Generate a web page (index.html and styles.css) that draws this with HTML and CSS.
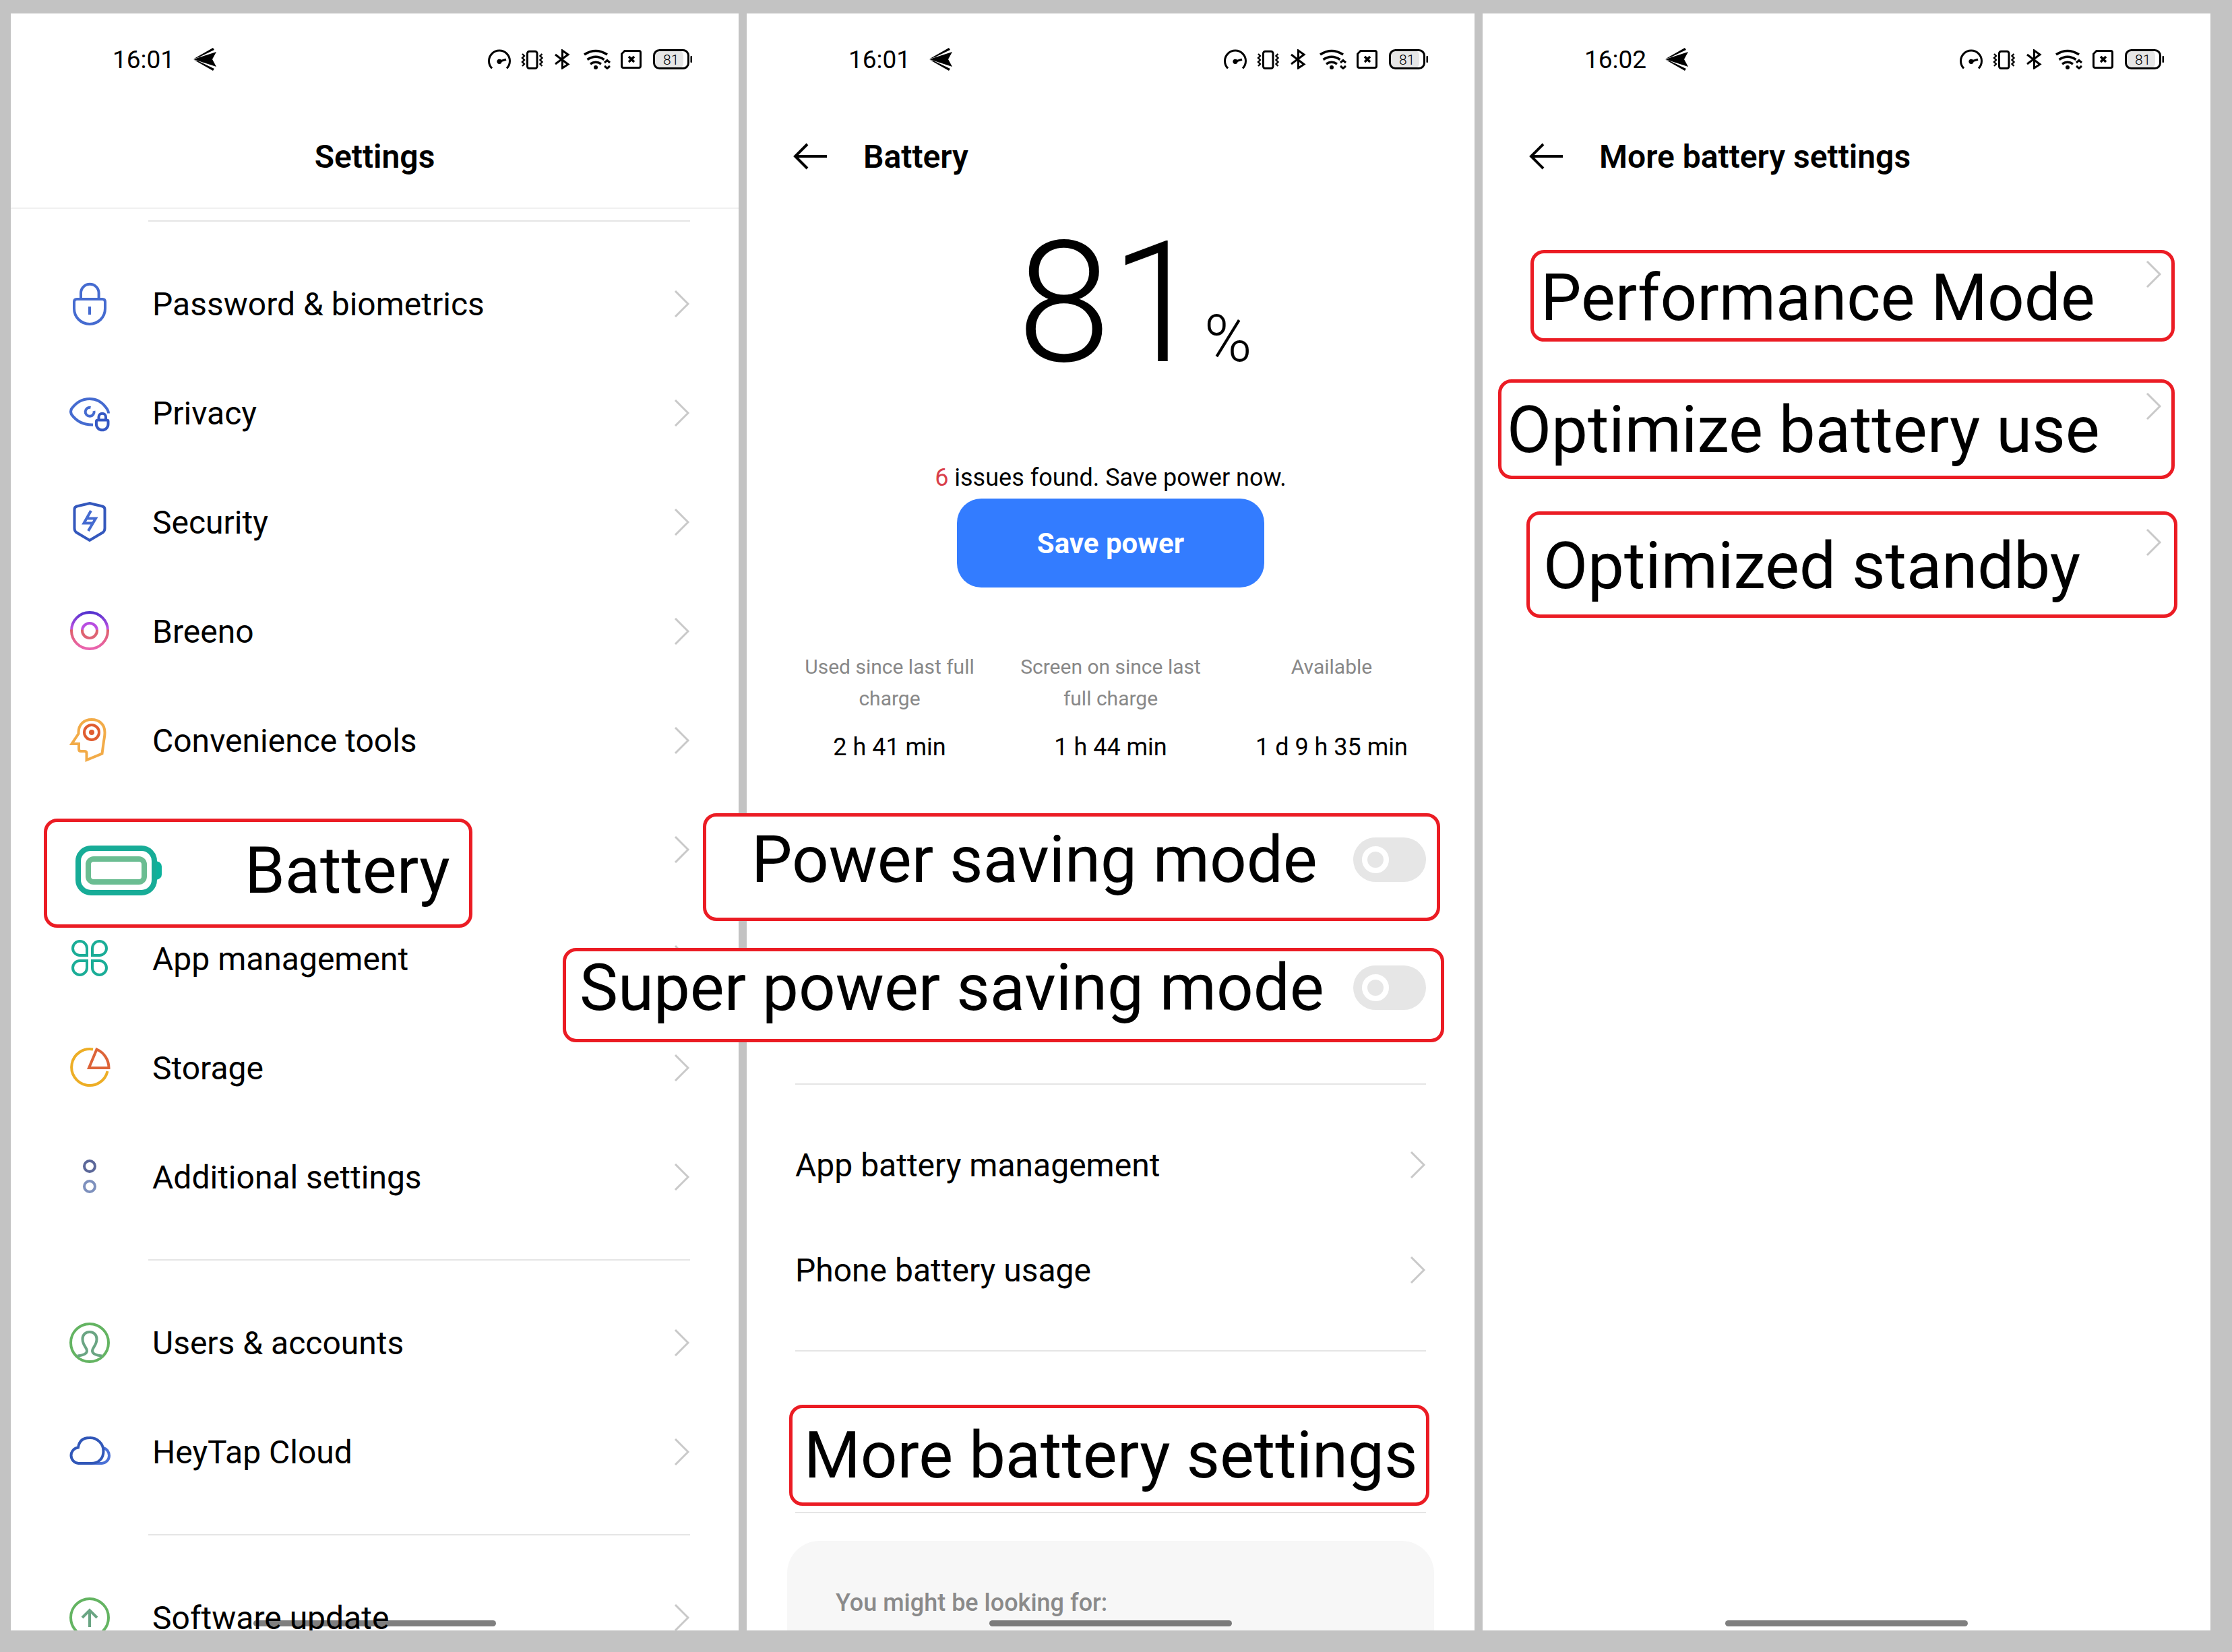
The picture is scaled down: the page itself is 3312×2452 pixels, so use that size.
FILE: index.html
```html
<!DOCTYPE html>
<html lang="en">
  <head>
    <meta charset="UTF-8" />
    <meta name="viewport" content="width=device-width, initial-scale=1.0" />
    <title>Battery settings</title>
    <link rel="stylesheet" href="styles.css">
  </head>
  <body>
    <!-- shared icons -->
    <svg class="sprite" aria-hidden="true">
      <symbol id="plane" viewBox="0 0 36 34">
        <path d="M0 17L34 6L28 17L34 28Z" />
        <path d="M1 16L29 0L31 3L8 14ZM1 18L29 34L31 31L8 20Z" />
      </symbol>
      <symbol id="status-icons" viewBox="0 0 304 30">
        <g fill="none" stroke="#000" stroke-width="3">
          <path d="M7 28.5A15.5 15.5 0 1 1 29 28.5M18 18.3L28 15.3" />
          <rect x="59.5" y="3.3" width="14.5" height="25.2" rx="3" />
          <path stroke-width="2.4" d="M52 7l3 3-3 3 3 3-3 3 3 3-3 3M81.500 7l-3 3 3 3-3 3 3 3-3 3 3 3" />
          <path d="M101 8L120 22.500L111.500 28V2L120 8L101 22" />
          <path stroke-width="3.6" d="M144 8Q161 -3 178 8M148.500 15.500Q161 7 173.500 15.500M153 22Q161 16.500 169 22" />
          <path stroke-width="3" d="M174 20l4-3.500 4 3.500M174 25l4 3.500 4-3.500" />
          <path d="M204 2.500H225Q227.500 2.500 227.500 5V25Q227.500 27.500 225 27.500H202Q199.500 27.500 199.500 25V7Z" />
          <path stroke-width="3.5" d="M210 11l8 8M218 11l-8 8" />
        </g>
        <circle cx="18" cy="18.3" r="3.600" />
        <circle cx="161" cy="27" r="3" />
        <rect x="249" y="2" width="42" height="26" rx="7" fill="#e6e6e6" />
        <rect x="247.500" y="1.500" width="51" height="27" rx="8" fill="none" stroke="#000" stroke-width="3" />
        <rect x="301.500" y="10" width="2.500" height="10" rx="1" />
        <text x="261" y="22.500" font-size="21" font-weight="300">81</text>
      </symbol>
      <symbol id="chevron" viewBox="0 0 24 40">
        <path d="M2 1L21 20L2 39" fill="none" stroke="#c9c9c9" stroke-width="3" />
      </symbol>
      <symbol id="back" viewBox="0 0 50 42">
        <path d="M50 21H4M21 3L3 21L21 39" fill="none" stroke="#000" stroke-width="4" />
      </symbol>
    </svg>

    <main class="screens">
      <section class="phone">
        <div class="status-bar">
          <span>16:01</span>
          <svg class="plane"><use href="#plane" /></svg>
          <svg class="status-icons"><use href="#status-icons" /></svg>
        </div>
        <header class="header header-center">
          <h1>Settings</h1>
        </header>
        <div class="settings-scroll">
          <hr class="inset">
          <ul class="settings-list">
            <li>
              <a class="row" href="#password">
                <svg class="icon" viewBox="0 0 90 90" stroke="#456bd0">
                  <path d="M32 38V29a13.300 13.300 0 0 1 26.600 0v9" />
                  <path d="M26 38H64Q68 38 68 42V52a23 23 0 0 1-46 0V42Q22 38 26 38ZM45 49V61" />
                </svg>
                <span>Password &amp; biometrics</span>
                <svg class="chevron"><use href="#chevron" /></svg>
              </a>
            </li>
            <li>
              <a class="row" href="#privacy">
                <svg class="icon" viewBox="0 0 90 90" stroke="#456bd0">
                  <path d="M73 45.500C73 42 71 39 69 36.500C63 28.500 54 24 45 24C32 24 23 32 18 39Q16 43 18 47C23 54 32 63 50 62.500" />
                  <path d="M46.500 37A6.500 6.500 0 1 0 51.500 42" />
                  <path stroke="#3558c4" d="M58.500 55.500V51a5 5 0 0 1 10.500 0v4.500M57 55.500H70.500Q72.500 55.500 72.500 57.500V61.500a8.800 8.800 0 0 1-17.600 0V57.500Q55 55.500 57 55.500Z" />
                </svg>
                <span>Privacy</span>
                <svg class="chevron"><use href="#chevron" /></svg>
              </a>
            </li>
            <li>
              <a class="row" href="#security">
                <svg class="icon" viewBox="0 0 90 90" stroke="#3458bd">
                  <path d="M45 17L64 21.500Q67.500 22.500 67.500 26V54Q67.500 58 65 60L45 72L25 60Q22.500 58 22.500 54V26Q22.500 22.500 26 21.500Z" />
                  <path stroke="#456bd0" d="M47 28L36.500 46.500H49M43 58L54 39.500H41" />
                </svg>
                <span>Security</span>
                <svg class="chevron"><use href="#chevron" /></svg>
              </a>
            </li>
            <li>
              <a class="row" href="#breeno">
                <svg class="icon" viewBox="0 0 90 90">
                  <defs>
                    <linearGradient id="breeno-outer" x1="0" y1="0" x2="0" y2="1">
                      <stop offset="0" stop-color="#5432cf" />
                      <stop offset="0.460" stop-color="#c252e2" />
                      <stop offset="0.480" stop-color="#de6068" />
                      <stop offset="1" stop-color="#ea63b0" />
                    </linearGradient>
                    <linearGradient id="breeno-inner" x1="0" y1="0" x2="0" y2="1">
                      <stop offset="0" stop-color="#b44be0" />
                      <stop offset="0.420" stop-color="#c252e2" />
                      <stop offset="0.460" stop-color="#de6068" />
                      <stop offset="1" stop-color="#de6478" />
                    </linearGradient>
                  </defs>
                  <circle cx="45" cy="44" r="27" stroke="url(#breeno-outer)" />
                  <circle cx="45" cy="44" r="11" stroke="url(#breeno-inner)" />
                </svg>
                <span>Breeno</span>
                <svg class="chevron"><use href="#chevron" /></svg>
              </a>
            </li>
            <li>
              <a class="row" href="#tools">
                <svg class="icon" viewBox="0 0 90 90" stroke="#f2ab48">
                  <path d="M48 14C36 14 28.500 22 28.500 33V35L18.500 50H29V58Q29 61 32 61H37Q40.500 61 40.500 64V74L63.500 64.500L66 46Q67.500 38 67.500 33C67.500 21 59 14 48 14Z" />
                  <circle cx="48" cy="33" r="11" stroke="#e05c30" />
                  <circle cx="48" cy="33" r="4" fill="#e05c30" stroke="none" />
                </svg>
                <span>Convenience tools</span>
                <svg class="chevron"><use href="#chevron" /></svg>
              </a>
            </li>
            <li class="row row-battery">
              <svg class="chevron"><use href="#chevron" /></svg>
              <a class="callout callout-battery" href="#battery">
                <svg class="battery-icon" viewBox="0 0 128 74" fill="none">
                  <rect x="4" y="4" width="113" height="66" rx="19" stroke="#17ac97" stroke-width="8" />
                  <rect x="19" y="20" width="83" height="34" rx="8" stroke="#6bbd92" stroke-width="8" />
                  <path d="M120 23Q128 25 128 31V43Q128 49 120 51Z" fill="#0cb29c" />
                </svg>
                <span>Battery</span>
              </a>
            </li>
            <li>
              <a class="row" href="#apps">
                <svg class="icon" viewBox="0 0 90 90" stroke="#1aad97">
                  <path d="M41 40H30.500A10.500 10.500 0 1 1 41 29.500Z" />
                  <path d="M49 40H59.500A10.500 10.500 0 1 0 49 29.500Z" />
                  <path d="M41 48H30.500A10.500 10.500 0 1 0 41 58.500Z" />
                  <path d="M49 48H59.500A10.500 10.500 0 1 1 49 58.500Z" />
                </svg>
                <span>App management</span>
                <svg class="chevron"><use href="#chevron" /></svg>
              </a>
            </li>
            <li>
              <a class="row" href="#storage">
                <svg class="icon" viewBox="0 0 90 90" stroke="#edae26">
                  <path d="M50 17.500A27 27 0 1 0 71.500 50" />
                  <path stroke="#dd6438" d="M55.500 17.500L44 45H73.500A30 30 0 0 0 55.500 17.500Z" />
                </svg>
                <span>Storage</span>
                <svg class="chevron"><use href="#chevron" /></svg>
              </a>
            </li>
            <li>
              <a class="row" href="#additional">
                <svg class="icon" viewBox="0 0 90 90">
                  <circle cx="45" cy="29" r="8" stroke="#5b6799" />
                  <circle cx="45" cy="59" r="8" stroke="#7d90bd" />
                </svg>
                <span>Additional settings</span>
                <svg class="chevron"><use href="#chevron" /></svg>
              </a>
            </li>
          </ul>
          <hr class="inset">
          <ul class="settings-list">
            <li>
              <a class="row" href="#users">
                <svg class="icon" viewBox="0 0 90 90" stroke="#64b462">
                  <circle cx="45" cy="45" r="28" />
                  <path stroke="#6aa583" d="M27 64.500C36 63.500 41 61 41 57C41 52 34.500 49 34.500 39.500C34.500 33 39 29 45 29S55.500 33 55.500 39.500C55.500 49 49 52 49 57C49 61 54 63.500 63 64.500" />
                </svg>
                <span>Users &amp; accounts</span>
                <svg class="chevron"><use href="#chevron" /></svg>
              </a>
            </li>
            <li>
              <a class="row" href="#cloud">
                <svg class="icon" viewBox="0 0 90 90" stroke="#4a70d6">
                  <path d="M65.500 39C70 40 74 45 74 50.500A11.500 11.500 0 0 1 63 62H45" />
                  <path stroke="#3157b8" d="M28 38.500Q30 24 45 24A20 20 0 0 1 65.500 44C65.500 55 58 62 47 62H28.500A11.800 11.800 0 0 1 28 38.500Z" />
                </svg>
                <span>HeyTap Cloud</span>
                <svg class="chevron"><use href="#chevron" /></svg>
              </a>
            </li>
          </ul>
          <hr class="inset">
          <ul class="settings-list">
            <li>
              <a class="row" href="#update">
                <svg class="icon" viewBox="0 0 90 90" stroke="#64b462">
                  <circle cx="45" cy="45" r="28" />
                  <path stroke="#6aa583" d="M45 59V34M34 45L45 34L56 45" />
                </svg>
                <span>Software update</span>
                <svg class="chevron"><use href="#chevron" /></svg>
              </a>
            </li>
          </ul>
        </div>
        <div class="home-bar"></div>
      </section>

      <section class="phone">
        <div class="status-bar">
          <span>16:01</span>
          <svg class="plane"><use href="#plane" /></svg>
          <svg class="status-icons"><use href="#status-icons" /></svg>
        </div>
        <header class="header">
          <a href="#settings" aria-label="Back"><svg class="back"><use href="#back" /></svg></a>
          <h1>Battery</h1>
        </header>
        <div class="battery-page">
          <div class="level">
            <span class="level-value">81</span>
            <span class="level-unit">%</span>
          </div>
          <p class="issues"><span class="count">6</span> issues found. Save power now.</p>
          <button class="save-button" type="button">Save power</button>
          <dl class="stats">
            <div>
              <dt>Used since last full charge</dt>
              <dd>2 h 41 min</dd>
            </div>
            <div>
              <dt>Screen on since last full charge</dt>
              <dd>1 h 44 min</dd>
            </div>
            <div>
              <dt>Available</dt>
              <dd>1 d 9 h 35 min</dd>
            </div>
          </dl>
          <label class="callout callout-power">
            <span>Power saving mode</span>
            <input class="toggle" type="checkbox">
          </label>
          <label class="callout callout-super">
            <span>Super power saving mode</span>
            <input class="toggle" type="checkbox">
          </label>
          <hr>
          <a class="row row-small" href="#app-battery">
            <span>App battery management</span>
            <svg class="chevron"><use href="#chevron" /></svg>
          </a>
          <a class="row row-small" href="#usage">
            <span>Phone battery usage</span>
            <svg class="chevron"><use href="#chevron" /></svg>
          </a>
          <hr>
          <a class="callout callout-more" href="#more"><span>More battery settings</span></a>
          <hr class="hr-tight">
          <div class="suggestions">You might be looking for:</div>
        </div>
        <div class="home-bar"></div>
      </section>

      <section class="phone">
        <div class="status-bar">
          <span>16:02</span>
          <svg class="plane"><use href="#plane" /></svg>
          <svg class="status-icons"><use href="#status-icons" /></svg>
        </div>
        <header class="header">
          <a href="#battery" aria-label="Back"><svg class="back"><use href="#back" /></svg></a>
          <h1>More battery settings</h1>
        </header>
        <nav class="more-page">
          <a class="callout callout-performance" href="#performance">
            <span>Performance Mode</span>
            <svg class="chevron"><use href="#chevron" /></svg>
          </a>
          <a class="callout callout-optimize" href="#optimize">
            <span>Optimize battery use</span>
            <svg class="chevron"><use href="#chevron" /></svg>
          </a>
          <a class="callout callout-standby" href="#standby">
            <span>Optimized standby</span>
            <svg class="chevron"><use href="#chevron" /></svg>
          </a>
        </nav>
        <div class="home-bar"></div>
      </section>
    </main>
  </body>
</html>
```
FILE: styles.css
```css
* {
  box-sizing: border-box;
}

body {
  margin: 0;
  background-color: #c3c3c3;
  color: #000;
  font-family: Roboto, "Liberation Sans", sans-serif;
  font-size: 48px;
}

a {
  color: inherit;
  text-decoration: none;
}

svg {
  display: block;
  flex-shrink: 0;
}

.sprite {
  display: none;
}

/* three phone screens side by side */
.screens {
  display: grid;
  grid-template-columns: repeat(3, 1fr);
  gap: 12px;
  height: 100vh;
  padding: 20px 32px 32px 16px;
}

.phone {
  position: relative;
  display: flex;
  flex-direction: column;
  min-width: 0;
  min-height: 0;
  background-color: #fff;
}

.status-bar {
  display: flex;
  flex-shrink: 0;
  align-items: center;
  height: 136px;
  padding: 0 69px 0 151px;
  font-size: 37px;
}

.plane {
  width: 36px;
  height: 34px;
  margin-left: 28px;
}

.status-icons {
  width: 304px;
  height: 30px;
  margin-left: auto;
}

.header {
  display: flex;
  flex-shrink: 0;
  align-items: center;
  gap: 54px;
  height: 152px;
  padding: 0 69px;
}

.header-center {
  justify-content: center;
}

.header h1 {
  margin: 0;
  font-size: 48px;
  font-weight: 600;
}

.back {
  width: 50px;
  height: 42px;
}

hr {
  width: 100%;
  height: 2px;
  margin: 41px 0;
  border: none;
  background-color: #e5e5e5;
}

/* settings list */
.settings-scroll {
  flex: 1;
  min-height: 0;
  overflow: hidden;
  padding: 17px 72px 0;
  border-top: 2px solid #f0f0f0;
}

.settings-list {
  margin: 0;
  padding: 0;
  list-style: none;
}

hr.inset {
  width: auto;
  margin-left: 132px;
}

.inset:first-child {
  margin-top: 0;
}

.row {
  display: flex;
  align-items: center;
  height: 162px;
}

.row-small {
  height: 156px;
}

.icon {
  width: 90px;
  height: 90px;
  margin-right: 48px;
  fill: none;
  stroke-width: 4px;
}

.chevron {
  width: 24px;
  height: 40px;
  margin-left: auto;
}

.row-battery {
  position: relative;
}

/* highlighted entries */
.callout {
  display: flex;
  align-items: center;
  flex-shrink: 0;
  z-index: 1;
  border: 5px solid #eb1c24;
  border-radius: 20px;
  background-color: #fff;
  font-size: 96px;
  line-height: 100px;
  white-space: nowrap;
}

.callout .chevron {
  align-self: flex-start;
  margin-top: -5px;
}

.callout-battery {
  position: absolute;
  top: 35px;
  left: -23px;
  gap: 123px;
  padding: 22px 28px 30px 42px;
}

.battery-icon {
  width: 128px;
  height: 74px;
}

/* battery page */
.battery-page {
  display: flex;
  flex: 1;
  flex-direction: column;
  min-height: 0;
  padding: 18px 72px 0;
}

.battery-page hr {
  flex-shrink: 0;
}

.level {
  display: grid;
  grid-template-columns: 1fr auto 1fr;
  align-items: baseline;
  flex-shrink: 0;
  height: 250px;
  font-weight: 300;
}

.level-value {
  grid-column: 2;
  font-size: 250px;
  line-height: 250px;
}

.level-unit {
  font-size: 96px;
  line-height: 100px;
}

.issues {
  margin: 111px 0 9px;
  font-size: 36px;
  line-height: 44px;
  text-align: center;
}

.count {
  color: #d93f4c;
}

.save-button {
  flex-shrink: 0;
  align-self: center;
  width: 456px;
  height: 132px;
  border: none;
  border-radius: 36px;
  background-color: #337cff;
  color: #fff;
  font-family: inherit;
  font-size: 42px;
  font-weight: 700;
}

.stats {
  display: grid;
  grid-template-columns: repeat(3, 1fr);
  margin: 94px -24px 76px;
  font-size: 36px;
  line-height: 44px;
  text-align: center;
}

.stats div {
  display: flex;
  flex-direction: column;
  justify-content: space-between;
  gap: 27px;
  padding: 0 20px;
}

.stats dt {
  color: #888;
  font-size: 30px;
  line-height: 47px;
}

.stats dd {
  margin: 0;
}

.toggle {
  flex-shrink: 0;
  display: flex;
  align-items: center;
  width: 108px;
  height: 66px;
  margin: 0 0 0 auto;
  padding: 0 13px;
  border-radius: 33px;
  background-color: #e6e6e6;
  appearance: none;
}

.toggle::before {
  content: "";
  box-sizing: border-box;
  width: 40px;
  height: 40px;
  border: 8px solid #fff;
  border-radius: 50%;
}

.toggle:checked {
  justify-content: flex-end;
  background-color: #337cff;
}

.callout-power {
  margin: 0 -21px 40px -137px;
  padding: 14px 16px 36px 67px;
}

.callout-super {
  margin: 0 -27px 20px -345px;
  padding: 4px 22px 26px 20px;
}

.callout-more {
  margin: 38px -5px 9px -9px;
  padding: 20px 13px 20px 17px;
}

.battery-page .hr-tight {
  margin-top: 0;
}

.suggestions {
  flex: 1;
  min-height: 0;
  margin: 0 -12px;
  padding: 70px 72px 0;
  overflow: hidden;
  border-radius: 48px 48px 0 0;
  background-color: #f7f7f7;
  color: #8a8a8a;
  font-size: 36px;
  font-weight: 500;
  line-height: 44px;
}

/* more battery settings page */
.more-page {
  padding-top: 63px;
}

.callout-performance {
  margin: 0 53px 56px 71px;
  padding: 16px 14px 10px 10px;
}

.callout-optimize {
  margin: 0 53px 48px 23px;
  padding: 20px 14px 18px 8px;
}

.callout-standby {
  margin: 0 49px 0 65px;
  padding: 26px 18px 22px 20px;
}

.home-bar {
  position: absolute;
  bottom: 6px;
  left: 50%;
  width: 360px;
  height: 9px;
  border-radius: 5px;
  background-color: rgba(0, 0, 0, 0.5);
  transform: translateX(-50%);
}
```
